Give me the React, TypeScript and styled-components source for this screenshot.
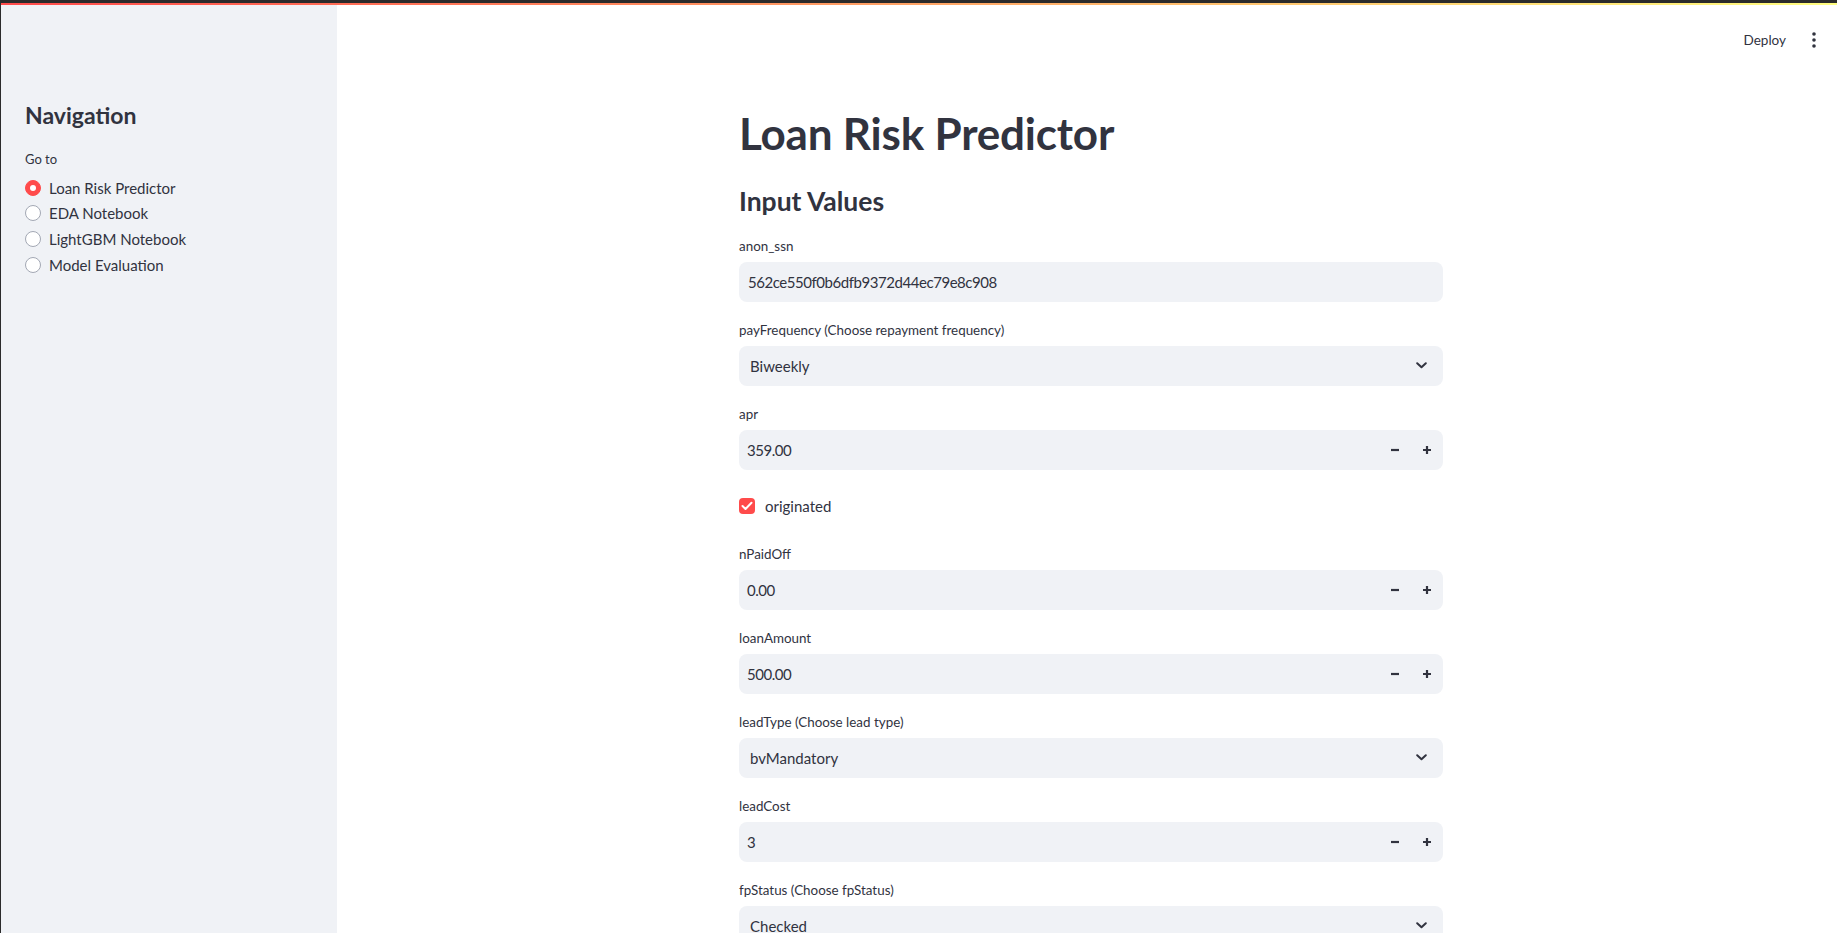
import React from "react";
import styled, { createGlobalStyle } from "styled-components";

const GlobalStyle = createGlobalStyle`
  html, body { margin: 0; padding: 0; background: #ffffff; }
  body {
    font-family: Lato, "Open Sans", sans-serif;
    color: #31333f;
    overflow: hidden;
  }
  * { box-sizing: border-box; }
`;

const Frame = styled.div`
  height: 933px;
  display: flex;
  flex-direction: column;
  border-left: 1px solid #2b2b2b;
  overflow: hidden;
`;

const TopBand = styled.div`
  height: 3px;
  background: #2b2b2b;
  flex: none;
`;

const Decoration = styled.div`
  height: 2px;
  flex: none;
  background: linear-gradient(90deg, rgb(255, 75, 75), rgb(255, 253, 128));
`;

const Body = styled.div`
  flex: 1;
  display: flex;
  min-height: 0;
`;

const Sidebar = styled.aside`
  width: 336px;
  flex: none;
  background: #f0f2f6;
  padding: 95px 24px 0 24px;
  display: flex;
  flex-direction: column;
`;

const SideTitle = styled.h1`
  margin: 0;
  font-size: 23px;
  line-height: 30px;
  font-weight: 700;
  color: #31333f;
`;

const GroupLabel = styled.div`
  margin-top: 19px;
  font-size: 13px;
  line-height: 20px;
  color: #31333f;
`;

const RadioList = styled.div`
  margin-top: 6px;
  display: flex;
  flex-direction: column;
`;

const RadioItem = styled.label`
  height: 25.6px;
  display: flex;
  align-items: center;
  gap: 8px;
  font-size: 15px;
  color: #31333f;
`;

const RadioDot = styled.span<{ $on?: boolean }>`
  width: 16px;
  height: 16px;
  border-radius: 50%;
  flex: none;
  background: ${(p) => (p.$on ? "#ff4b4b" : "#ffffff")};
  border: 1px solid ${(p) => (p.$on ? "#ff4b4b" : "#a3a8b4")};
  display: flex;
  align-items: center;
  justify-content: center;
  &::after {
    content: "";
    display: ${(p) => (p.$on ? "block" : "none")};
    width: 6px;
    height: 6px;
    border-radius: 50%;
    background: #ffffff;
  }
`;

const Main = styled.main`
  flex: 1;
  display: flex;
  flex-direction: column;
  min-width: 0;
  padding-left: 8px;
`;

const Header = styled.header`
  height: 70px;
  flex: none;
  display: flex;
  align-items: center;
  justify-content: flex-end;
  padding-right: 17px;
  gap: 14px;
`;

const DeployButton = styled.button`
  border: none;
  background: transparent;
  font-family: inherit;
  font-size: 13.5px;
  color: #31333f;
  padding: 4px 8px;
  cursor: pointer;
`;

const MenuButton = styled.button`
  border: none;
  background: transparent;
  width: 12px;
  height: 20px;
  padding: 0;
  display: flex;
  align-items: center;
  justify-content: center;
`;

const Content = styled.div`
  width: 704px;
  margin: 0 auto;
  padding-top: 32px;
  display: flex;
  flex-direction: column;
`;

const Title = styled.h1`
  margin: 0;
  font-size: 44px;
  line-height: 52px;
  font-weight: 700;
  color: #31333f;
  letter-spacing: -0.2px;
`;

const SubTitle = styled.h3`
  margin: 25px 0 15.5px 0;
  font-size: 26.5px;
  line-height: 34px;
  font-weight: 700;
  color: #31333f;
`;

const Fields = styled.div`
  display: flex;
  flex-direction: column;
  gap: 16px;
`;

const Field = styled.div`
  display: flex;
  flex-direction: column;
`;

const Label = styled.label`
  height: 24px;
  margin-bottom: 4px;
  display: flex;
  align-items: center;
  font-size: 13.4px;
  color: #31333f;
`;

const InputBox = styled.div`
  height: 40px;
  border-radius: 8px;
  background: #f0f2f6;
  display: flex;
  align-items: center;
  font-size: 15px;
  color: #31333f;
`;

const InputText = styled.span<{ $pad: number; $tight?: boolean }>`
  flex: 1;
  padding-left: ${(p) => p.$pad}px;
  white-space: nowrap;
  letter-spacing: ${(p) => (p.$tight ? "-0.45px" : "normal")};
`;

const StepButton = styled.span`
  width: 32px;
  height: 40px;
  display: flex;
  align-items: center;
  justify-content: center;
  flex: none;
`;

const ChevronWrap = styled.span`
  width: 26px;
  padding-right: 16px;
  display: flex;
  align-items: center;
  justify-content: flex-end;
  box-sizing: content-box;
`;

const CheckRow = styled.label`
  height: 40px;
  display: flex;
  align-items: center;
  gap: 10px;
  font-size: 15px;
  color: #31333f;
`;

const CheckBox = styled.span`
  width: 16px;
  height: 16px;
  border-radius: 4px;
  background: #ff4b4b;
  display: flex;
  align-items: center;
  justify-content: center;
  flex: none;
`;

const Chevron = () => (
  <svg width="11" height="7" viewBox="0 0 11 7">
    <path d="M1.2 1.2 L5.5 5.3 L9.8 1.2" fill="none" stroke="#31333f" strokeWidth="2" strokeLinecap="round" strokeLinejoin="round" />
  </svg>
);

const Minus = () => (
  <svg width="10" height="10" viewBox="0 0 10 10">
    <path d="M1 5 H9" stroke="#31333f" strokeWidth="2.2" />
  </svg>
);

const Plus = () => (
  <svg width="10" height="10" viewBox="0 0 10 10">
    <path d="M1 5 H9 M5 1 V9" stroke="#31333f" strokeWidth="2.2" />
  </svg>
);

const Dots = () => (
  <svg width="4" height="16" viewBox="0 0 4 16">
    <circle cx="2" cy="2" r="1.8" fill="#31333f" />
    <circle cx="2" cy="8" r="1.8" fill="#31333f" />
    <circle cx="2" cy="14" r="1.8" fill="#31333f" />
  </svg>
);

const Check = () => (
  <svg width="12" height="10" viewBox="0 0 12 10">
    <path d="M1.5 5 L4.5 8 L10.5 1.8" fill="none" stroke="#ffffff" strokeWidth="2" strokeLinecap="round" strokeLinejoin="round" />
  </svg>
);

type FieldDef =
  | { kind: "text"; label: string; value: string }
  | { kind: "select"; label: string; value: string }
  | { kind: "number"; label: string; value: string }
  | { kind: "check"; label: string };

const fields: FieldDef[] = [
  { kind: "text", label: "anon_ssn", value: "562ce550f0b6dfb9372d44ec79e8c908" },
  { kind: "select", label: "payFrequency (Choose repayment frequency)", value: "Biweekly" },
  { kind: "number", label: "apr", value: "359.00" },
  { kind: "check", label: "originated" },
  { kind: "number", label: "nPaidOff", value: "0.00" },
  { kind: "number", label: "loanAmount", value: "500.00" },
  { kind: "select", label: "leadType (Choose lead type)", value: "bvMandatory" },
  { kind: "number", label: "leadCost", value: "3" },
  { kind: "select", label: "fpStatus (Choose fpStatus)", value: "Checked" },
];

const nav = ["Loan Risk Predictor", "EDA Notebook", "LightGBM Notebook", "Model Evaluation"];

function renderField(f: FieldDef, i: number) {
  if (f.kind === "check") {
    return (
      <CheckRow key={i}>
        <CheckBox>
          <Check />
        </CheckBox>
        {f.label}
      </CheckRow>
    );
  }
  return (
    <Field key={i}>
      <Label>{f.label}</Label>
      <InputBox>
        <InputText
          $pad={f.kind === "select" ? 11 : f.kind === "number" ? 8 : 9}
          $tight={f.kind !== "select"}
        >
          {f.value}
        </InputText>
        {f.kind === "number" && (
          <>
            <StepButton>
              <Minus />
            </StepButton>
            <StepButton>
              <Plus />
            </StepButton>
          </>
        )}
        {f.kind === "select" && (
          <ChevronWrap>
            <Chevron />
          </ChevronWrap>
        )}
      </InputBox>
    </Field>
  );
}

export default function App() {
  return (
    <>
      <GlobalStyle />
      <Frame>
        <TopBand />
        <Decoration />
        <Body>
          <Sidebar>
            <SideTitle>Navigation</SideTitle>
            <GroupLabel>Go to</GroupLabel>
            <RadioList>
              {nav.map((n, i) => (
                <RadioItem key={n}>
                  <RadioDot $on={i === 0} />
                  {n}
                </RadioItem>
              ))}
            </RadioList>
          </Sidebar>
          <Main>
            <Header>
              <DeployButton>Deploy</DeployButton>
              <MenuButton>
                <Dots />
              </MenuButton>
            </Header>
            <Content>
              <Title>Loan Risk Predictor</Title>
              <SubTitle>Input Values</SubTitle>
              <Fields>{fields.map(renderField)}</Fields>
            </Content>
          </Main>
        </Body>
      </Frame>
    </>
  );
}
